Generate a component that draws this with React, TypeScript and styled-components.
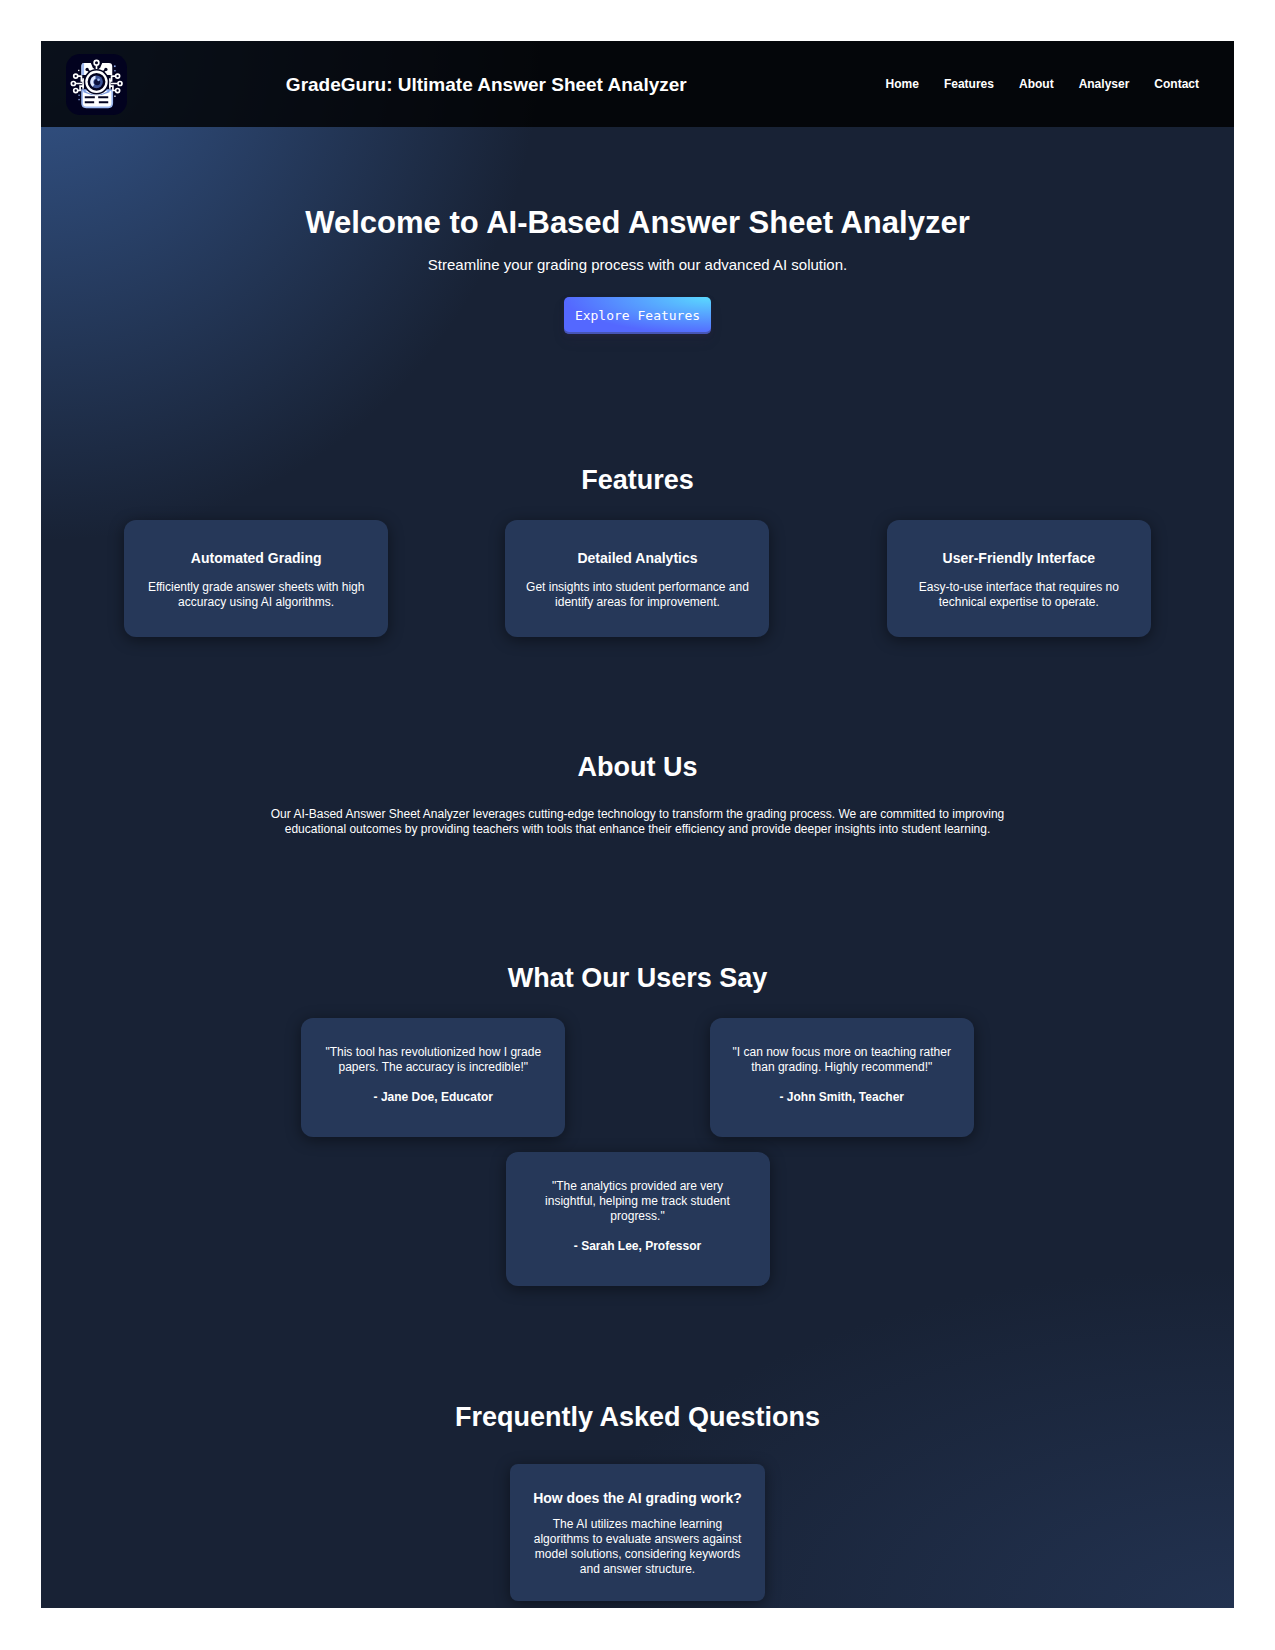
import React from "react";
import styled, { createGlobalStyle } from "styled-components";

const GlobalStyle = createGlobalStyle`
  * {
    box-sizing: border-box;
  }
  body {
    margin: 0;
    background: #ffffff;
    color: #ffffff;
    font-family: "Liberation Sans", Arial, sans-serif;
    font-size: 12px;
    line-height: 15px;
  }
  h1, h2, h3, p, ul {
    margin: 0;
    padding: 0;
  }
`;

const Page = styled.div`
  padding: 41px;
`;

const Site = styled.div`
  overflow: hidden;
  background:
    radial-gradient(circle 500px at 0 0, #34558a, rgba(24, 34, 53, 0)),
    radial-gradient(ellipse 680px 340px at 100% 100%, #223250, rgba(24, 34, 53, 0)),
    #182235;
`;

const Header = styled.header`
  display: flex;
  align-items: center;
  justify-content: space-between;
  padding: 13px 35px 12px 25px;
  background: rgba(0, 0, 0, 0.8);
`;

const LogoArt = styled.svg`
  display: block;
  width: 61px;
  height: 61px;
`;

const SiteTitle = styled.p`
  font-size: 19px;
  line-height: 22px;
  font-weight: bold;
`;

const NavList = styled.ul`
  display: flex;
  gap: 25px;
  padding-left: 40px;
  list-style: none;
`;

const NavLink = styled.a`
  color: inherit;
  font-weight: bold;
  text-decoration: none;
`;

const Hero = styled.section`
  display: flex;
  flex-direction: column;
  align-items: center;
  padding: 78px 24px 73px;
  text-align: center;
`;

const HeroTitle = styled.h1`
  font-size: 31px;
  line-height: 36px;
`;

const HeroText = styled.p`
  margin: 15px 0 23px;
  font-size: 15px;
  line-height: 18px;
`;

const ExploreButton = styled.button`
  height: 37px;
  padding: 0 11px;
  border: 0;
  border-radius: 5px;
  color: #ffffff;
  font-family: "DejaVu Sans Mono", monospace;
  font-size: 13px;
  line-height: 16px;
  background: radial-gradient(100% 100% at 100% 0%, #5adaff 0%, #5468ff 100%);
  box-shadow:
    rgba(45, 35, 66, 0.4) 0 2px 4px,
    rgba(45, 35, 66, 0.3) 0 7px 13px -3px,
    rgba(58, 65, 111, 0.5) 0 -2px 0 inset;
  cursor: pointer;
`;

const Section = styled.section<{ $bottom?: number }>`
  padding: 57px 32px ${(p) => p.$bottom ?? 57}px;
  text-align: center;
`;

const SectionTitle = styled.h2<{ $gap?: number }>`
  margin-bottom: ${(p) => p.$gap ?? 24}px;
  font-size: 27px;
  line-height: 32px;
`;

const AboutText = styled.p`
  max-width: 770px;
  margin: 0 auto;
`;

const CardRow = styled.div<{ $maxWidth?: string }>`
  display: flex;
  flex-wrap: wrap;
  justify-content: space-around;
  gap: 15px;
  max-width: ${(p) => p.$maxWidth ?? "none"};
  margin: 0 auto;
`;

const Card = styled.article`
  width: 264px;
  padding: 30px 20px 27px;
  border-radius: 12px;
  background: #263859;
  box-shadow: 0 3px 15px rgba(0, 0, 0, 0.45);
`;

const QuoteCard = styled(Card)`
  padding: 27px 20px 32px;
`;

const FaqCard = styled(Card)`
  width: 255px;
  padding: 26px 19px 24px;
  border-radius: 8px;
`;

const CardTitle = styled.h3<{ $gap: number }>`
  margin-bottom: ${(p) => p.$gap}px;
  font-size: 14px;
  line-height: 16px;
`;

const Author = styled.p`
  margin-top: 15px;
  font-weight: bold;
`;

const navItems = ["Home", "Features", "About", "Analyser", "Contact"];

const features = [
  { title: "Automated Grading", text: "Efficiently grade answer sheets with high accuracy using AI algorithms." },
  { title: "Detailed Analytics", text: "Get insights into student performance and identify areas for improvement." },
  { title: "User-Friendly Interface", text: "Easy-to-use interface that requires no technical expertise to operate." },
];

const quotes = [
  { text: '"This tool has revolutionized how I grade papers. The accuracy is incredible!"', author: "- Jane Doe, Educator" },
  { text: '"I can now focus more on teaching rather than grading. Highly recommend!"', author: "- John Smith, Teacher" },
  { text: '"The analytics provided are very insightful, helping me track student progress."', author: "- Sarah Lee, Professor" },
];

function Logo() {
  return (
    <LogoArt viewBox="0 0 182 182" role="img" aria-label="GradeGuru logo">
      <rect width="182" height="182" rx="42" fill="#02021f" />
      {/* sheet behind the lens */}
      <path d="M54 27h20l6 14 11 8 11-8 6-14h20q10 0 10 10v26H46V37q0-10 8-10z" fill="#fff" />
      <path d="M46 36q0-8 8-9v36h-8z" fill="#9db8f0" />
      <path d="M64 48l16 10M118 48l-16 10" fill="none" stroke="#02021f" strokeWidth="5" />
      <circle cx="63" cy="46" r="5" fill="#02021f" />
      <circle cx="119" cy="46" r="5" fill="#02021f" />
      <path d="M91 32v17" stroke="#fff" strokeWidth="5" />
      <circle cx="91" cy="26" r="7" fill="#02021f" stroke="#fff" strokeWidth="5" />
      {/* lower tray */}
      <path d="M48 108h86q4 0 4 5v34q0 12-12 12H60q-12 0-12-12z" fill="#fff" stroke="#9db8f0" strokeWidth="5" />
      <path d="M56 129h30M96 129h30M56 144h28M98 144h28" stroke="#02021f" strokeWidth="6" />
      {/* circuit branches */}
      <g fill="none" stroke="#fff" strokeWidth="5">
        <path d="M34 66h12v14h8M28 88h20M34 109h8V96h10" />
        <path d="M148 66h-12v14h-8M154 88h-20M148 109h-8V96h-10" />
        <path d="M51 72v32M131 72v32" />
        <g fill="#02021f">
          <circle cx="29" cy="66" r="6" />
          <circle cx="22" cy="88" r="6" />
          <circle cx="29" cy="109" r="6" />
          <circle cx="154" cy="66" r="6" />
          <circle cx="161" cy="88" r="6" />
          <circle cx="154" cy="109" r="6" />
        </g>
      </g>
      {/* lens */}
      <path d="M52 106q39 32 78 0v8q-39 18-78 0z" fill="#7f9de0" />
      <circle cx="91" cy="83" r="38" fill="#02021f" />
      <circle cx="91" cy="83" r="30" fill="#02021f" stroke="#fff" strokeWidth="7" />
      <circle cx="91" cy="83" r="19" fill="#3c5296" />
      <path d="M88 65a19 19 0 0 0-9 33l6-6a11 11 0 0 1 3-18z" fill="#dfe8ff" />
      <circle cx="93" cy="84" r="9" fill="#0a0f3c" />
      <circle cx="97" cy="77" r="4" fill="#9db8f0" />
      <g fill="#8fa9e6">
        <rect x="143" y="34" width="5" height="5" />
        <rect x="144" y="48" width="4" height="4" />
        <rect x="37" y="121" width="4" height="4" />
        <rect x="37" y="134" width="4" height="4" />
      </g>
      <g fill="#fff">
        <rect x="36" y="47" width="4" height="4" />
        <rect x="144" y="124" width="4" height="4" />
      </g>
    </LogoArt>
  );
}

export default function App() {
  return (
    <>
      <GlobalStyle />
      <Page>
        <Site>
          <Header>
            <Logo />
            <SiteTitle>GradeGuru: Ultimate Answer Sheet Analyzer</SiteTitle>
            <nav>
              <NavList>
                {navItems.map((item) => (
                  <li key={item}>
                    <NavLink href={`#${item.toLowerCase()}`}>{item}</NavLink>
                  </li>
                ))}
              </NavList>
            </nav>
          </Header>
          <main>
            <Hero id="home">
              <HeroTitle>Welcome to AI-Based Answer Sheet Analyzer</HeroTitle>
              <HeroText>Streamline your grading process with our advanced AI solution.</HeroText>
              <ExploreButton type="button">Explore Features</ExploreButton>
            </Hero>
            <Section id="features">
              <SectionTitle>Features</SectionTitle>
              <CardRow>
                {features.map((f) => (
                  <Card key={f.title}>
                    <CardTitle $gap={14}>{f.title}</CardTitle>
                    <p>{f.text}</p>
                  </Card>
                ))}
              </CardRow>
            </Section>
            <Section id="about" $bottom={68}>
              <SectionTitle>About Us</SectionTitle>
              <AboutText>
                Our AI-Based Answer Sheet Analyzer leverages cutting-edge technology to transform the grading process. We are
                committed to improving educational outcomes by providing teachers with tools that enhance their efficiency and
                provide deeper insights into student learning.
              </AboutText>
            </Section>
            <Section $bottom={58}>
              <SectionTitle>What Our Users Say</SectionTitle>
              <CardRow $maxWidth="802px">
                {quotes.map((q) => (
                  <QuoteCard key={q.author}>
                    <p>{q.text}</p>
                    <Author>{q.author}</Author>
                  </QuoteCard>
                ))}
              </CardRow>
            </Section>
            <Section $bottom={7}>
              <SectionTitle $gap={31}>Frequently Asked Questions</SectionTitle>
              <CardRow>
                <FaqCard>
                  <CardTitle $gap={11}>How does the AI grading work?</CardTitle>
                  <p>
                    The AI utilizes machine learning algorithms to evaluate answers against model solutions, considering
                    keywords and answer structure.
                  </p>
                </FaqCard>
              </CardRow>
            </Section>
          </main>
        </Site>
      </Page>
    </>
  );
}
